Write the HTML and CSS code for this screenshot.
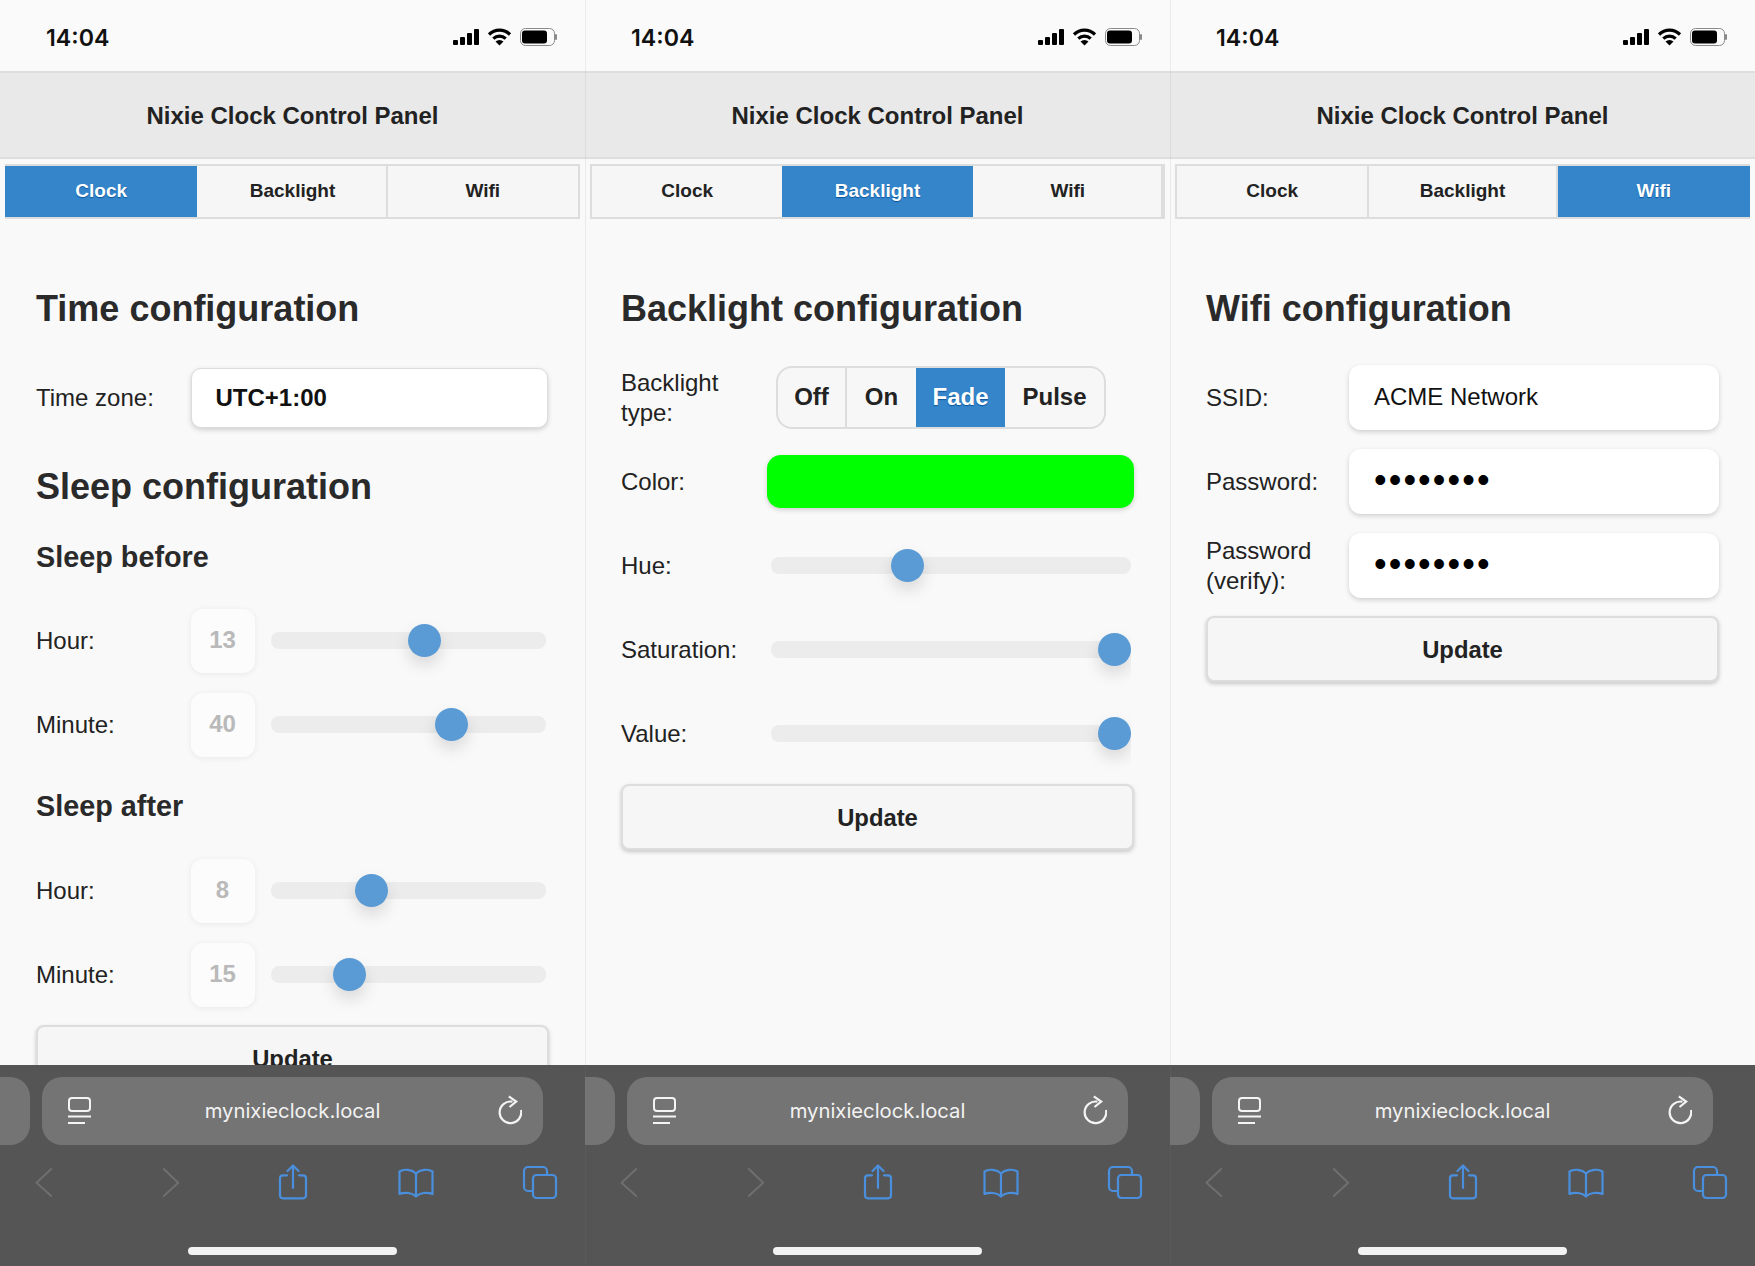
FILE: index.html
```html
<!DOCTYPE html>
<html lang="en">
<head>
<meta charset="utf-8">
<title>Nixie Clock Control Panel</title>
<link rel="stylesheet" href="styles.css">
</head>
<body>
<div class="screens">

<section class="phone">
  <div class="status">
    <span class="time">14:04</span>
    <div class="status-icons">
      <svg width="26" height="18" viewBox="0 0 26 18"><rect x="0" y="12" width="5" height="5" rx="1"/><rect x="7" y="9" width="5" height="8" rx="1"/><rect x="14" y="5" width="5" height="12" rx="1"/><rect x="21" y="1" width="5" height="16" rx="1"/></svg>
      <svg width="25" height="18" viewBox="0 0 25 18"><path d="M2 6.5a15 15 0 0 1 21 0" class="arc"/><path d="M6.3 10.6a9 9 0 0 1 12.4 0" class="arc"/><path d="M12.5 17.5l-4-3.9a5.800 5.800 0 0 1 8 0z"/></svg>
      <svg width="37" height="18" viewBox="0 0 37 18"><rect x="0.500" y="0.500" width="34" height="17" rx="5" class="batt"/><rect x="2" y="2.500" width="25" height="13" rx="3"/><rect x="35" y="6" width="2" height="6" rx="1" class="nub"/></svg>
    </div>
  </div>
  <header class="title">Nixie Clock Control Panel</header>
  <nav class="tabs"><a class="tab active">Clock</a><a class="tab">Backlight</a><a class="tab">Wifi</a></nav>
  <main class="content cols-clock">
    <h2 class="h-first">Time configuration</h2>
    <div class="row"><label>Time zone:</label><div class="field bordered strong">UTC+1:00</div></div>
    <h2 class="h-next">Sleep configuration</h2>
    <h3>Sleep before</h3>
    <div class="row"><label>Hour:</label><div class="ranged"><div class="num">13</div><div class="slider"><div class="track"></div><div class="thumb" style="left:49.7%"></div></div></div></div>
    <div class="row"><label>Minute:</label><div class="ranged"><div class="num">40</div><div class="slider"><div class="track"></div><div class="thumb" style="left:59.7%"></div></div></div></div>
    <h3 class="h3-next">Sleep after</h3>
    <div class="row"><label>Hour:</label><div class="ranged"><div class="num">8</div><div class="slider"><div class="track"></div><div class="thumb" style="left:30.6%"></div></div></div></div>
    <div class="row"><label>Minute:</label><div class="ranged"><div class="num">15</div><div class="slider"><div class="track"></div><div class="thumb" style="left:22.4%"></div></div></div></div>
    <button class="update">Update</button>
  </main>
  <div class="safari">
    <div class="url-row">
      <div class="prev-pill"></div>
      <div class="url-pill">
        <svg class="reader" width="23" height="28" viewBox="0 0 23 28"><rect x="1" y="1" width="21" height="13" rx="3"/><path d="M0 19.500H23M0 26H17"/></svg>
        <span class="url">mynixieclock.local</span>
        <svg class="reload" width="24" height="32" viewBox="0 0 24 32"><path d="M14.500 6.700A10.800 10.800 0 1 0 23 15"/><path d="M10.800 1.300L18.200 6.500L11.500 12"/></svg>
      </div>
    </div>
    <div class="toolbar">
      <svg class="tool dim" viewBox="0 0 38 36"><path d="M26.200 5L11.500 18.700L26.200 32"/></svg>
      <svg class="tool dim" viewBox="0 0 38 36"><path d="M11.800 5L26.200 18.700L11.800 32"/></svg>
      <svg class="tool" viewBox="0 0 38 36"><path d="M13 11.300H9a3 3 0 0 0-3 3V31.300a3 3 0 0 0 3 3H29a3 3 0 0 0 3-3V14.300a3 3 0 0 0-3-3H25"/><path d="M19 2V24M13.500 7L19 1.500L24.500 7"/></svg>
      <svg class="tool" viewBox="0 0 38 36"><path d="M19 9.500C15 5.500 7 4.500 2.500 7.500V30C8 28 15 28.500 19 32.500C23 28.500 30 28 35.500 30V7.500C31 4.500 23 5.500 19 9.500V32"/></svg>
      <svg class="tool" viewBox="0 0 38 36"><rect x="12" y="11" width="23" height="23" rx="3.500"/><path d="M26 10.500V7a4 4 0 0 0-4-4H7a4 4 0 0 0-4 4V23a4 4 0 0 0 4 4H11.500"/></svg>
    </div>
    <div class="home"></div>
  </div>
</section>

<section class="phone">
  <div class="status">
    <span class="time">14:04</span>
    <div class="status-icons">
      <svg width="26" height="18" viewBox="0 0 26 18"><rect x="0" y="12" width="5" height="5" rx="1"/><rect x="7" y="9" width="5" height="8" rx="1"/><rect x="14" y="5" width="5" height="12" rx="1"/><rect x="21" y="1" width="5" height="16" rx="1"/></svg>
      <svg width="25" height="18" viewBox="0 0 25 18"><path d="M2 6.5a15 15 0 0 1 21 0" class="arc"/><path d="M6.3 10.6a9 9 0 0 1 12.4 0" class="arc"/><path d="M12.5 17.5l-4-3.9a5.800 5.800 0 0 1 8 0z"/></svg>
      <svg width="37" height="18" viewBox="0 0 37 18"><rect x="0.500" y="0.500" width="34" height="17" rx="5" class="batt"/><rect x="2" y="2.500" width="25" height="13" rx="3"/><rect x="35" y="6" width="2" height="6" rx="1" class="nub"/></svg>
    </div>
  </div>
  <header class="title">Nixie Clock Control Panel</header>
  <nav class="tabs"><a class="tab">Clock</a><a class="tab active">Backlight</a><a class="tab">Wifi</a></nav>
  <main class="content cols-backlight">
    <h2 class="h-first">Backlight configuration</h2>
    <div class="row"><label>Backlight type:</label>
      <div class="seg"><span class="seg-off">Off</span><span class="seg-on">On</span><span class="seg-fade active">Fade</span><span class="seg-pulse">Pulse</span></div>
    </div>
    <div class="row"><label>Color:</label><div class="swatch"></div></div>
    <div class="row"><label>Hue:</label><div class="slider inset"><div class="track"></div><div class="thumb" style="left:33.2%"></div></div></div>
    <div class="row"><label>Saturation:</label><div class="slider inset"><div class="track"></div><div class="thumb" style="left:90.8%"></div></div></div>
    <div class="row"><label>Value:</label><div class="slider inset"><div class="track"></div><div class="thumb" style="left:90.8%"></div></div></div>
    <button class="update">Update</button>
  </main>
  <div class="safari">
    <div class="url-row">
      <div class="prev-pill"></div>
      <div class="url-pill">
        <svg class="reader" width="23" height="28" viewBox="0 0 23 28"><rect x="1" y="1" width="21" height="13" rx="3"/><path d="M0 19.500H23M0 26H17"/></svg>
        <span class="url">mynixieclock.local</span>
        <svg class="reload" width="24" height="32" viewBox="0 0 24 32"><path d="M14.500 6.700A10.800 10.800 0 1 0 23 15"/><path d="M10.800 1.300L18.200 6.500L11.500 12"/></svg>
      </div>
    </div>
    <div class="toolbar">
      <svg class="tool dim" viewBox="0 0 38 36"><path d="M26.200 5L11.500 18.700L26.200 32"/></svg>
      <svg class="tool dim" viewBox="0 0 38 36"><path d="M11.800 5L26.200 18.700L11.800 32"/></svg>
      <svg class="tool" viewBox="0 0 38 36"><path d="M13 11.300H9a3 3 0 0 0-3 3V31.300a3 3 0 0 0 3 3H29a3 3 0 0 0 3-3V14.300a3 3 0 0 0-3-3H25"/><path d="M19 2V24M13.500 7L19 1.500L24.500 7"/></svg>
      <svg class="tool" viewBox="0 0 38 36"><path d="M19 9.500C15 5.500 7 4.500 2.500 7.500V30C8 28 15 28.500 19 32.500C23 28.500 30 28 35.500 30V7.500C31 4.500 23 5.500 19 9.500V32"/></svg>
      <svg class="tool" viewBox="0 0 38 36"><rect x="12" y="11" width="23" height="23" rx="3.500"/><path d="M26 10.500V7a4 4 0 0 0-4-4H7a4 4 0 0 0-4 4V23a4 4 0 0 0 4 4H11.500"/></svg>
    </div>
    <div class="home"></div>
  </div>
</section>

<section class="phone">
  <div class="status">
    <span class="time">14:04</span>
    <div class="status-icons">
      <svg width="26" height="18" viewBox="0 0 26 18"><rect x="0" y="12" width="5" height="5" rx="1"/><rect x="7" y="9" width="5" height="8" rx="1"/><rect x="14" y="5" width="5" height="12" rx="1"/><rect x="21" y="1" width="5" height="16" rx="1"/></svg>
      <svg width="25" height="18" viewBox="0 0 25 18"><path d="M2 6.5a15 15 0 0 1 21 0" class="arc"/><path d="M6.3 10.6a9 9 0 0 1 12.4 0" class="arc"/><path d="M12.5 17.5l-4-3.9a5.800 5.800 0 0 1 8 0z"/></svg>
      <svg width="37" height="18" viewBox="0 0 37 18"><rect x="0.500" y="0.500" width="34" height="17" rx="5" class="batt"/><rect x="2" y="2.500" width="25" height="13" rx="3"/><rect x="35" y="6" width="2" height="6" rx="1" class="nub"/></svg>
    </div>
  </div>
  <header class="title">Nixie Clock Control Panel</header>
  <nav class="tabs"><a class="tab">Clock</a><a class="tab">Backlight</a><a class="tab active">Wifi</a></nav>
  <main class="content cols-wifi">
    <h2 class="h-first">Wifi configuration</h2>
    <div class="row"><label>SSID:</label><div class="field">ACME Network</div></div>
    <div class="row"><label>Password:</label><div class="field dots">••••••••</div></div>
    <div class="row"><label>Password (verify):</label><div class="field dots">••••••••</div></div>
    <button class="update">Update</button>
  </main>
  <div class="safari">
    <div class="url-row">
      <div class="prev-pill"></div>
      <div class="url-pill">
        <svg class="reader" width="23" height="28" viewBox="0 0 23 28"><rect x="1" y="1" width="21" height="13" rx="3"/><path d="M0 19.500H23M0 26H17"/></svg>
        <span class="url">mynixieclock.local</span>
        <svg class="reload" width="24" height="32" viewBox="0 0 24 32"><path d="M14.500 6.700A10.800 10.800 0 1 0 23 15"/><path d="M10.800 1.300L18.200 6.500L11.500 12"/></svg>
      </div>
    </div>
    <div class="toolbar">
      <svg class="tool dim" viewBox="0 0 38 36"><path d="M26.200 5L11.500 18.700L26.200 32"/></svg>
      <svg class="tool dim" viewBox="0 0 38 36"><path d="M11.800 5L26.200 18.700L11.800 32"/></svg>
      <svg class="tool" viewBox="0 0 38 36"><path d="M13 11.300H9a3 3 0 0 0-3 3V31.300a3 3 0 0 0 3 3H29a3 3 0 0 0 3-3V14.300a3 3 0 0 0-3-3H25"/><path d="M19 2V24M13.500 7L19 1.500L24.500 7"/></svg>
      <svg class="tool" viewBox="0 0 38 36"><path d="M19 9.500C15 5.500 7 4.500 2.500 7.500V30C8 28 15 28.500 19 32.500C23 28.500 30 28 35.500 30V7.500C31 4.500 23 5.500 19 9.500V32"/></svg>
      <svg class="tool" viewBox="0 0 38 36"><rect x="12" y="11" width="23" height="23" rx="3.500"/><path d="M26 10.500V7a4 4 0 0 0-4-4H7a4 4 0 0 0-4 4V23a4 4 0 0 0 4 4H11.500"/></svg>
    </div>
    <div class="home"></div>
  </div>
</section>

</div>
</body>
</html>
```
FILE: styles.css
```css
* { box-sizing: border-box; }
html, body { margin: 0; padding: 0; }
body {
  width: 1755px;
  height: 1266px;
  overflow: hidden;
  background: #f9f9f9;
  color: #222;
  font-family: "Liberation Sans", Arial, sans-serif;
  font-size: 24px;
}
.screens { display: grid; grid-template-columns: repeat(3, 585px); height: 1266px; }
.phone { position: relative; display: flex; flex-direction: column; height: 1266px; overflow: hidden; }
.phone + .phone::before {
  content: "";
  position: absolute;
  left: 0; top: 0; bottom: 0;
  width: 1px;
  background: rgba(130, 130, 130, .12);
  z-index: 3;
}

/* status bar */
.status {
  height: 71px;
  flex: none;
  display: flex;
  align-items: center;
  justify-content: space-between;
  padding: 3px 28px 0 46px;
  background: #fafafa;
}
.time { padding-top: 2px; font-family: Inter, "Liberation Sans", sans-serif; font-weight: 600; font-size: 23.2px; color: #111; }
.status-icons { display: flex; gap: 8px; align-items: center; }
.status-icons svg { display: block; fill: #000; }
.status-icons .arc { fill: none; stroke: #000; stroke-width: 3.2; }
.status-icons .batt { fill: none; stroke: #8a8a8a; }
.status-icons .nub { fill: #8a8a8a; }

/* header and tabs */
.title {
  height: 88px;
  flex: none;
  display: flex;
  align-items: center;
  justify-content: center;
  padding-top: 2px;
  background: #e9e9e9;
  border-top: 2px solid #dedede;
  border-bottom: 2px solid #dedede;
  font-weight: 700;
  font-size: 24px;
  color: #222;
}
.tabs {
  flex: none;
  display: grid;
  grid-template-columns: repeat(3, 1fr);
  height: 55px;
  margin: 5px 5px 0;
  border: 2px solid #ddd;
  background: #f6f6f6;
}
.tab {
  display: flex;
  align-items: center;
  justify-content: center;
  padding-bottom: 2px;
  font-weight: 700;
  font-size: 19px;
  text-shadow: 0 1px 0 #f3f3f3;
}
.tab:nth-child(2) { box-shadow: inset 2px 0 #ddd, inset -2px 0 #ddd; }
.tab.active + .tab { box-shadow: inset -2px 0 #ddd; }
.tab.active, .seg .active {
  background: #3585cb;
  color: #fff;
  text-shadow: 0 1px 1px #0a5599;
}
.tab.active { box-shadow: none; }
.tab.active:first-child { margin-left: -2px; }
.tab.active:last-child { margin-right: -2px; }

/* content */
.content { flex: 1; min-height: 0; overflow: hidden; padding: 0 36px; }
h2, h3 { margin: 0; font-weight: 700; color: #2a2a2a; }
h2 { font-size: 36px; line-height: 40px; }
h3 { font-size: 28.8px; line-height: 34px; margin: 33px 0 34px; }
.h-first { margin: 70px 0 36px; }
.h-next { margin-top: 37px; }
.h3-next { margin: 32px 0 35px; }

.row {
  display: grid;
  align-items: center;
  height: 65px;
  margin-bottom: 19px;
}
.cols-clock .row { grid-template-columns: 154.5px 1fr; }
.cols-backlight .row { grid-template-columns: 146px 1fr; }
.cols-wifi .row { grid-template-columns: 143px 1fr; }
label { line-height: 30px; padding-right: 6px; }

.field {
  height: 65px;
  display: flex;
  align-items: center;
  padding: 0 0 2px 25px;
  background: #fff;
  border-radius: 12px;
  box-shadow: 0 2px 5px rgba(0, 0, 0, .17);
  color: #111;
}
.field.bordered {
  height: 60px;
  border: 1px solid #dcdcdc;
  margin-right: 1px;
  border-radius: 10px;
  padding: 0 0 0 24px;
}
.field.strong { font-weight: 700; }
.field.dots { font-size: 36px; letter-spacing: 2.100px; color: #000; padding-bottom: 3px; padding-left: 25px; }

.ranged { display: grid; grid-template-columns: 64px 1fr; gap: 16.5px; margin-right: 3px; align-items: center; }
.num {
  height: 64px;
  display: flex;
  align-items: center;
  justify-content: center;
  padding-bottom: 2px;
  background: #fcfcfc;
  border-radius: 12px;
  box-shadow: 0 1px 6px rgba(0, 0, 0, .07);
  font-weight: 700;
  color: #b9b9b9;
}
.slider { position: relative; height: 33px; display: flex; align-items: center; overflow-x: clip; }
.slider.inset { margin: 0 3px 0 4px; }
.track { width: 100%; height: 17px; border-radius: 8px; background: #ececec; }
.thumb {
  position: absolute;
  top: 0;
  width: 33px;
  height: 33px;
  border-radius: 50%;
  background: #5a9bd5;
  box-shadow: 0 8px 16px rgba(0, 0, 0, .13);
}
.update {
  display: block;
  width: 100%;
  height: 66px;
  margin: -1px 0 0;
  padding: 2px 0 0;
  background: #f6f6f6;
  border: 2px solid #ddd;
  border-radius: 8px;
  box-shadow: 0 2px 4px rgba(0, 0, 0, .2);
  font: 700 23.8px "Liberation Sans", Arial, sans-serif;
  color: #222;
  text-shadow: 0 1px 0 #f3f3f3;
}

/* backlight controls */
.seg {
  display: grid;
  grid-template-columns: 69px 69px 89px 1fr;
  width: 330px;
  height: 63px;
  margin: -1px 0 0 9px;
  border: 2px solid #ddd;
  border-radius: 16px;
  background: #f7f7f7;
  overflow: hidden;
  font-weight: 700;
  text-shadow: 0 1px 0 #f3f3f3;
}
.seg span { display: flex; align-items: center; justify-content: center; }
.seg .seg-off { border-right: 2px solid #ddd; }
.swatch {
  height: 53px;
  margin-top: -1px;
  background: #0f0;
  border-radius: 14px;
  box-shadow: 0 2px 5px rgba(0, 0, 0, .17);
}

/* safari chrome */
.safari { flex: none; height: 201px; background: #555; }
.url-row { display: flex; gap: 12px; height: 80px; padding-top: 12px; }
.prev-pill { width: 30px; background: #747474; border-radius: 0 20px 20px 0; }
.url-pill {
  width: 501px;
  display: grid;
  grid-template-columns: 1fr auto 1fr;
  align-items: center;
  padding: 0 21px;
  background: #747474;
  border-radius: 20px;
}
.url {
  padding-bottom: 2px;
  font-family: Inter, "Liberation Sans", sans-serif;
  font-size: 20.250px;
  font-weight: 400;
  color: #f2f2f2;
}
.reader { margin-left: 5px; fill: none; stroke: #f4f4f4; stroke-width: 2; }
.reload { justify-self: end; fill: none; stroke: #f4f4f4; stroke-width: 2.200; }
.toolbar {
  display: grid;
  grid-template-columns: 127px 122px 123px 124px 38px;
  height: 36px;
  margin-top: 19px;
  padding-left: 24.5px;
}
.tool { width: 38px; height: 36px; fill: none; stroke: #4a8fdd; stroke-width: 2.200; stroke-linejoin: round; stroke-linecap: round; }
.tool.dim { stroke: #6f6f6f; stroke-width: 2; }
.home { width: 209px; height: 8px; margin: 47px 0 0 188px; background: #f2f2f2; border-radius: 4px; }
```
